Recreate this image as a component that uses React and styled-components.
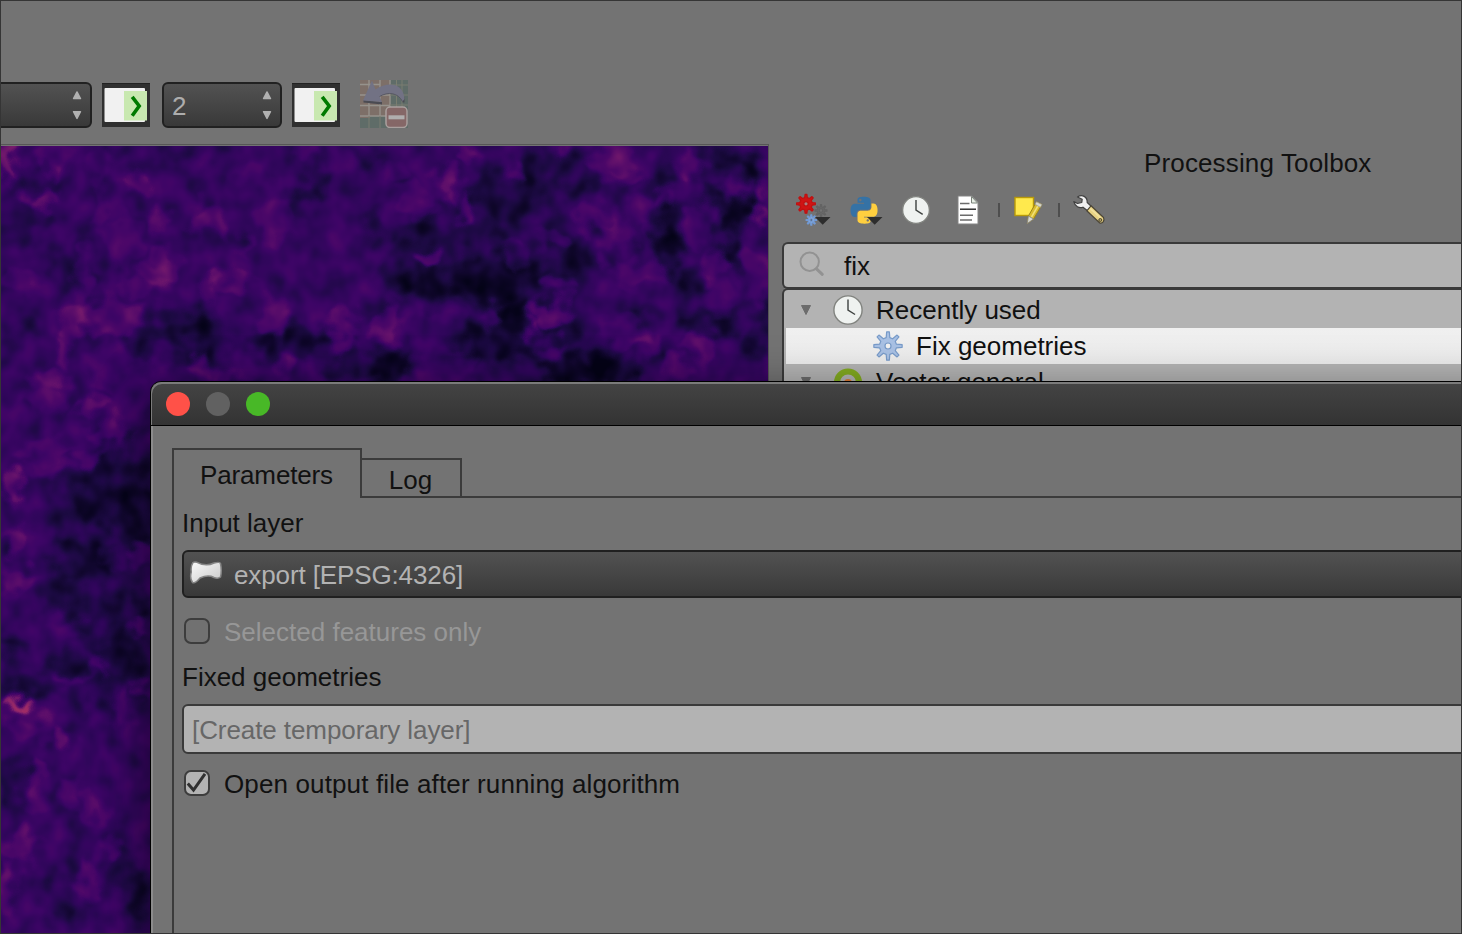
import React from 'react';
import styled, { createGlobalStyle } from 'styled-components';

const GlobalStyle = createGlobalStyle`
  body { margin: 0; overflow: hidden; background: #737373; }
  * { box-sizing: border-box; }
  svg { display: block; flex: none; }
`;

const Frame = styled.div`
  position: relative;
  display: flex;
  flex-direction: column;
  width: 1462px;
  height: 934px;
  overflow: hidden;
  border: 1px solid #353535;
  background: #737373;
  color: #111;
  font: 26px/36px "Liberation Sans", Arial, sans-serif;
  white-space: nowrap;
`;

const Toolbar = styled.div`
  display: flex;
  align-items: flex-start;
  flex: none;
  height: 143px;
  padding-top: 79px;
`;

const SpinBox = styled.div`
  display: flex;
  align-items: center;
  justify-content: space-between;
  flex: none;
  width: ${(p) => p.$width}px;
  height: 46px;
  margin: 2px 10px 0 ${(p) => p.$left}px;
  padding: 2px 7px 0 8px;
  border: 2px solid #212121;
  border-radius: 6px;
  background: linear-gradient(#525252, #393939);
  color: #adadad;
`;

const ZoomButton = styled.div`
  flex: none;
  width: 48px;
  height: 44px;
  margin-top: 3px;
  background: #303030;
`;

const UndoSlot = styled.div`
  margin-left: 20px;
`;

const Body = styled.div`
  display: flex;
  flex: 1;
  min-height: 0;
`;

const MapView = styled.div`
  flex: none;
  width: 768px;
  border-top: 1px solid #565656;
  border-right: 1px solid #565656;
  padding-top: 1px;
`;

const Panel = styled.div`
  display: flex;
  flex-direction: column;
  flex: 1;
  min-width: 0;
  padding-left: 13px;
`;

const PanelTitle = styled.div`
  height: 36px;
  margin-top: 1px;
  padding-left: 362px;
  letter-spacing: ${(p) => p.$spacing}px;
`;

const PanelTools = styled.div`
  display: flex;
  height: 50px;
  padding: 11px 0 0 13px;
`;

const Separator = styled.div`
  flex: none;
  width: 2px;
  height: 14px;
  margin: 11px ${(p) => p.$right}px 0 ${(p) => p.$left}px;
  background: #4e4e4e;
`;

const SearchBox = styled.div`
  display: flex;
  align-items: center;
  flex: none;
  height: 47px;
  margin-top: 11px;
  padding: 1px 0 0 14px;
  border: 2px solid #3a3a3a;
  border-right: 0;
  border-radius: 6px 0 0 6px;
  background: #b3b3b3;
`;

const Tree = styled.div`
  flex: 1;
  margin-top: -1px;
  padding: 2px 0 0 2px;
  border: 2px solid #3a3a3a;
  border-right: 0;
  border-radius: 6px 0 0 0;
  background: #b3b3b3;
`;

const TreeRow = styled.div`
  display: flex;
  align-items: center;
  height: 36px;
  background: ${(p) => (p.$selected ? 'linear-gradient(#f0f0f0, #ececec)' : 'transparent')};
`;

const Dialog = styled.div`
  position: absolute;
  left: 149px;
  top: 380px;
  width: 1500px;
  height: 700px;
  border: 1px solid #000;
  border-radius: 11px 0 0 0;
  background: #737373;
  box-shadow: 0 14px 50px rgba(0, 0, 0, 0.5);
  overflow: hidden;
`;

const TitleBar = styled.div`
  display: flex;
  align-items: center;
  gap: 16px;
  height: 44px;
  padding-left: 15px;
  border-bottom: 1px solid #000;
  border-radius: 10px 0 0 0;
  background: linear-gradient(#444, #333);
  box-shadow: inset 1px 2px 0 #7b7b7b;
`;

const Light = styled.span`
  width: 24px;
  height: 24px;
  border-radius: 50%;
  background: ${(p) => p.$color};
`;

const DialogBody = styled.div`
  height: 656px;
  padding: 22px 0 0 21px;
  box-shadow: inset 2px 0 0 #8c8c8c;
`;

const Tabs = styled.div`
  display: flex;
  align-items: flex-end;
`;

const Tab = styled.div`
  flex: none;
  width: ${(p) => (p.$active ? 190 : 100)}px;
  height: ${(p) => (p.$active ? 50 : 40)}px;
  padding-top: ${(p) => (p.$active ? 7 : 2)}px;
  padding-right: 1px;
  border: solid #3b3b3b;
  border-width: ${(p) => (p.$active ? '2px 2px 0 2px' : '2px 2px 2px 0')};
  text-align: center;
  letter-spacing: ${(p) => p.$spacing || 0}px;
`;

const TabLine = styled.div`
  flex: 1;
  height: 2px;
  background: #3b3b3b;
`;

const Pane = styled.div`
  height: 600px;
  padding: 7px 0 0 8px;
  border-left: 2px solid #3b3b3b;
`;

const Label = styled.div`
  height: 36px;
`;

const ComboBox = styled.div`
  display: flex;
  align-items: center;
  height: 48px;
  margin-top: 9px;
  padding: 2px 0 0 5px;
  border: 2px solid #202020;
  border-radius: 6px;
  background: linear-gradient(#525252, #393939);
  color: #b3b3b3;
  letter-spacing: ${(p) => p.$spacing}px;
`;

const LineEdit = styled.div`
  height: 50px;
  margin-top: 9px;
  padding: 6px 0 0 8px;
  border: 2px solid #3a3a3a;
  border-radius: 6px;
  background: #b3b3b3;
  color: #676767;
  letter-spacing: ${(p) => p.$spacing}px;
`;

const CheckRow = styled.div`
  display: flex;
  align-items: center;
  height: 26px;
  margin: ${(p) => p.$margin};
  padding-left: 2px;
  color: ${(p) => (p.$disabled ? '#979797' : '#111')};
  letter-spacing: ${(p) => p.$spacing || 0}px;
`;

const CheckBox = styled.span`
  width: 26px;
  height: 26px;
  margin-right: 14px;
  border: 2px solid #3d3d3d;
  border-radius: 7px;
  background: ${(p) => (p.$checked ? '#b3b3b3' : '#717171')};
`;

const CheckText = styled.span`
  padding-top: 2px;
`;

// [x, y, rx, ry, strength]: positive patches are warm, negative ones are dark.
const PATCHES = [
  [8, 158, 9, 26, .8], [55, 156, 18, 15, .35], [25, 198, 5, 9, .6], [45, 201, 12, 8, .75], [57, 173, 6, 7, .5],
  [135, 184, 13, 7, .55], [100, 165, 11, 18, .25], [100, 205, 6, 25, .3], [158, 222, 9, 12, .5], [208, 218, 17, 17, .5],
  [125, 240, 18, 24, .25], [160, 270, 17, 17, .5], [230, 281, 25, 8, .5], [210, 290, 7, 11, .5], [145, 287, 24, 10, .35],
  [112, 317, 28, 14, .5], [72, 322, 12, 16, .6], [62, 350, 9, 14, .55], [246, 243, 5, 8, .4], [275, 220, 20, 20, .3],
  [275, 315, 14, 15, .4], [345, 325, 15, 15, .55], [345, 347, 8, 9, .5], [387, 325, 12, 18, .55], [305, 150, 10, 8, .3],
  [202, 367, 8, 8, .5], [285, 367, 8, 8, .45], [225, 375, 14, 7, .5], [115, 365, 30, 14, .2], [50, 378, 14, 8, .5],
  [250, 180, 18, 10, .2], [83, 285, 6, 40, .3], [20, 280, 16, 6, .3],
  [468, 150, 15, 8, .5], [448, 172, 9, 12, .55], [453, 195, 5, 11, .6], [467, 210, 7, 13, .65], [412, 198, 12, 14, .35],
  [425, 212, 12, 8, .3], [398, 172, 8, 8, .3], [513, 172, 8, 10, .5], [565, 150, 5, 8, .5], [612, 160, 22, 18, .4],
  [630, 177, 14, 7, .5], [595, 218, 18, 14, .4], [618, 232, 18, 14, .35], [640, 210, 10, 18, .3], [690, 165, 8, 16, .45],
  [665, 200, 12, 6, .45], [700, 225, 12, 22, .35], [762, 192, 6, 9, .6], [758, 217, 5, 9, .8], [740, 188, 12, 4, .4],
  [428, 257, 12, 9, .65], [515, 255, 12, 15, .35], [555, 240, 16, 7, .35], [553, 285, 16, 8, .35], [640, 275, 24, 12, .4],
  [602, 258, 8, 6, .4], [713, 262, 8, 15, .4], [545, 317, 12, 11, .7], [563, 312, 7, 13, .65], [530, 328, 6, 7, .7],
  [492, 315, 10, 10, .4], [440, 330, 28, 22, .15], [443, 365, 36, 18, .25], [550, 350, 14, 9, .3], [622, 330, 22, 16, .3],
  [647, 340, 14, 8, .4], [755, 278, 14, 26, .3], [700, 345, 12, 12, .45], [678, 370, 12, 10, .5], [720, 300, 12, 20, .2],
  [15, 488, 9, 16, .85], [92, 405, 13, 8, .6], [98, 385, 10, 5, .4], [45, 400, 25, 12, .35], [45, 450, 30, 8, .35],
  [110, 432, 18, 11, .5], [88, 458, 10, 6, .5], [50, 466, 25, 6, .35], [15, 540, 14, 12, .5], [18, 582, 16, 11, .45],
  [18, 705, 13, 6, 1.2], [65, 738, 10, 9, .75], [30, 730, 22, 12, .4], [143, 555, 11, 10, .45], [110, 560, 12, 6, .25],
  [142, 625, 8, 10, .55], [95, 665, 7, 9, .5], [70, 682, 18, 4, .4], [142, 685, 7, 5, .6], [125, 708, 12, 16, .35],
  [35, 770, 9, 10, .45], [70, 790, 10, 14, .4], [35, 795, 7, 16, .35], [20, 845, 18, 12, .5], [90, 810, 15, 10, .4],
  [110, 845, 12, 7, .35], [85, 880, 7, 16, .4], [95, 896, 6, 7, .5], [8, 885, 9, 24, .5], [68, 628, 16, 8, .25],
  [310, 190, 16, 11, -.6], [325, 165, 8, 6, -.4], [375, 230, 8, 20, -.5], [365, 158, 11, 11, -.5], [180, 325, 30, 15, -.5],
  [205, 335, 26, 17, -.45], [305, 342, 22, 16, -.55], [264, 347, 15, 16, -.5], [65, 270, 15, 18, -.35], [95, 280, 8, 15, -.4],
  [81, 235, 8, 16, -.4], [33, 170, 7, 11, -.4], [20, 225, 28, 16, -.3], [180, 357, 38, 8, -.4], [370, 367, 50, 14, -.55],
  [392, 275, 10, 25, -.4], [125, 155, 22, 9, -.3], [200, 152, 30, 8, -.3], [20, 335, 14, 12, -.25], [138, 340, 24, 9, -.35],
  [505, 195, 34, 32, -.4], [545, 165, 24, 18, -.4], [582, 175, 14, 20, -.4], [668, 248, 13, 24, -.8], [673, 215, 12, 16, -.55],
  [715, 193, 15, 9, -.7], [752, 167, 13, 10, -.65], [722, 160, 14, 14, -.5], [738, 215, 14, 16, -.8], [732, 250, 8, 15, -.75],
  [495, 275, 42, 24, -.6], [430, 283, 32, 14, -.6], [510, 302, 36, 16, -.45], [490, 345, 40, 18, -.6], [515, 325, 14, 16, -.5],
  [590, 372, 48, 17, -.8], [430, 235, 25, 12, -.45], [395, 367, 20, 12, -.4], [634, 232, 5, 16, -.5], [570, 250, 15, 14, -.4],
  [702, 322, 24, 10, -.5], [725, 325, 14, 12, -.5], [762, 312, 8, 16, -.6], [695, 280, 14, 14, -.45], [667, 180, 12, 10, -.4],
  [640, 317, 24, 6, -.4], [757, 350, 10, 14, -.5], [668, 348, 9, 9, -.4], [560, 273, 22, 8, -.5], [560, 335, 22, 8, -.5],
  [500, 260, 100, 75, -.24], [520, 350, 110, 40, -.2], [700, 200, 60, 60, -.12], [110, 520, 60, 70, -.25], [120, 650, 50, 60, -.22],
  [115, 490, 42, 34, -.45], [135, 520, 25, 30, -.5], [90, 562, 34, 20, -.4], [60, 593, 20, 19, -.35], [65, 665, 16, 14, -.5],
  [30, 687, 24, 12, -.5], [10, 643, 15, 10, -.5], [122, 658, 22, 28, -.45], [93, 605, 24, 18, -.4], [98, 700, 12, 18, -.35],
  [143, 600, 10, 12, -.5], [12, 780, 14, 20, -.4], [120, 872, 20, 20, -.35], [60, 895, 14, 26, -.3], [140, 895, 12, 32, -.4],
  [60, 545, 18, 7, -.3], [140, 440, 14, 18, -.3], [8, 555, 10, 5, -.4],
];

// Dark patches go first so that the warm ones stay visible above them.
const ORDERED_PATCHES = [...PATCHES].sort((a, b) => Math.sign(a[4]) - Math.sign(b[4]));

function MapRaster() {
  return (
    <svg width="767" height="787" viewBox="1 146 767 787">
      <defs>
        <filter id="soft" x="-60%" y="-60%" width="220%" height="220%" colorInterpolationFilters="sRGB">
          <feGaussianBlur stdDeviation="3" />
        </filter>
        <filter id="shade" x="-80%" y="-80%" width="260%" height="260%" colorInterpolationFilters="sRGB">
          <feGaussianBlur stdDeviation="6" />
        </filter>
        <filter id="ramp" filterUnits="userSpaceOnUse" x="1" y="146" width="767" height="788" colorInterpolationFilters="sRGB">
          <feTurbulence type="fractalNoise" baseFrequency="0.05" numOctaves="2" seed="21" result="warp" />
          <feDisplacementMap in="SourceGraphic" in2="warp" scale="34" xChannelSelector="R" yChannelSelector="G" result="warped" />
          <feTurbulence type="fractalNoise" baseFrequency="0.046 0.04" numOctaves="2" seed="8" />
          <feColorMatrix values="1 0 0 0 0  1 0 0 0 0  1 0 0 0 0  0 0 0 0 1" result="noise" />
          <feComposite in="warped" in2="noise" operator="arithmetic" k1="0" k2="1" k3="0.5" k4="-0.25" />
          <feColorMatrix values="1 0 0 0 0  0 1 0 0 0  0 0 1 0 0  0 0 0 0 1" />
          <feComponentTransfer>
            <feFuncR type="table" tableValues=".016 .055 .11 .18 .24 .3 .39 .5 .62" />
            <feFuncG type="table" tableValues=".012 .024 .04 .026 .02 .03 .07 .125 .17" />
            <feFuncB type="table" tableValues=".09 .16 .26 .35 .4 .41 .42 .42 .4" />
          </feComponentTransfer>
        </filter>
      </defs>
      <g filter="url(#ramp)">
        <rect x="-40" y="100" width="860" height="880" fill="#6c6c6c" />
        {ORDERED_PATCHES.map(([x, y, rx, ry, s]) => (
          <ellipse key={`${x}-${y}`} cx={x} cy={y} rx={rx + 1} ry={ry + 1} fill={s > 0 ? '#fff' : '#000'}
            opacity={s > 0 ? s * 0.72 : -s * 0.9} filter={s > 0 ? 'url(#soft)' : 'url(#shade)'} />
        ))}
      </g>
    </svg>
  );
}

function gearPath(cx, cy, outer, inner, teeth) {
  const step = (Math.PI * 2) / teeth;
  const at = (r, a) => `${(cx + r * Math.sin(a)).toFixed(2)} ${(cy - r * Math.cos(a)).toFixed(2)}`;
  const points = [];
  for (let i = 0; i < teeth; i += 1) {
    const a = i * step;
    points.push(at(inner, a - step * 0.27), at(outer, a - step * 0.12), at(outer, a + step * 0.12), at(inner, a + step * 0.27));
  }
  return `M${points.join('L')}Z`;
}

function Gear({ cx, cy, outer, inner, hole, fill, stroke, holeFill, teeth = 8 }) {
  return (
    <g stroke={stroke} strokeWidth="1.2" strokeLinejoin="round">
      <path d={gearPath(cx, cy, outer, inner, teeth)} fill={fill} />
      <circle cx={cx} cy={cy} r={hole} fill={holeFill} />
    </g>
  );
}

function SpinArrows() {
  return (
    <svg width="12" height="30" viewBox="0 0 12 30" fill="#b0b0b0" stroke="#b0b0b0" strokeWidth="1.4" strokeLinejoin="round">
      <path d="M6 .9 9.5 7.6H2.5Z" />
      <path d="M2.5 20.6H9.5L6 27.4Z" />
    </svg>
  );
}

function GoIcon() {
  return (
    <svg width="48" height="44" viewBox="0 0 48 44">
      <path d="M0 .5H48" stroke="#222" />
      <rect x="2.5" y="5" width="40.5" height="34" rx="1" fill="#f1f1f1" />
      <rect x="22" y="8" width="23" height="29.5" fill="#c8e8b0" />
      <path d="M30.2 13.8 37.2 23 30.2 32.8" fill="none" stroke="#007a00" strokeWidth="3.6" />
    </svg>
  );
}

function MosaicUndoIcon() {
  return (
    <svg width="48" height="48" viewBox="0 0 48 48">
      <rect width="48" height="48" fill="#7d6f68" />
      <path d="M30 0H48V48H0V38H10V36H30Z" fill="#5f6c68" />
      <path d="M9 0V36M20 0V36M0 4.5H20M0 15H30M0 25.5H30M0 36H30M30 0V36" stroke="#96928c" strokeWidth="1.4" />
      <path d="M9 36V48M20 36V48M36.5 0V28M42 0V28M30 5H48M30 15H48M30 25H48" stroke="#7a7d70" strokeWidth="1" />
      <path d="M3.5 20V22.5L22 24.5V22ZM42.5 20V22.5H44.5V17Z" fill="#4b4b52" />
      <path d="M12 .5 3 20.5 22 22 19.5 16.5C28 11.5 38 12.5 42.5 21.5L44.5 19C43.5 3 28 1 15.5 9.5Z" fill="#727284" />
      <path d="M19.5 16.5C28 11.5 38 12.5 42.5 21.5" fill="none" stroke="#585864" strokeWidth="1" />
      <rect x="26" y="27" width="21" height="20.5" rx="4" fill="#856767" stroke="#aaa09e" strokeWidth="1.5" />
      <rect x="28.5" y="35.3" width="16" height="4" fill="#b0aeae" />
    </svg>
  );
}

function ClockFace({ cx, cy, r }) {
  return (
    <g>
      <circle cx={cx} cy={cy} r={r} fill="#eff2f0" stroke="#81837f" strokeWidth="1.4" />
      <path d={`M${cx} ${cy - r * 0.75}V${cy}L${cx + r * 0.5} ${cy + r * 0.32}`} fill="none" stroke="#3e4240" strokeWidth="1.4" />
    </g>
  );
}

const PYTHON = 'M14.25.18l.9.2.73.26.59.3.45.32.34.34.25.34.16.33.1.3.04.26.02.2-.01.13V8.5l-.05.63-.13.55-.21.46-.26.38-.3.31-.33.25-.35.19-.35.14-.33.1-.3.07-.26.04-.21.02H8.77l-.69.05-.59.14-.5.22-.41.27-.33.32-.27.35-.2.36-.15.37-.1.35-.07.32-.04.27-.02.21v3.06H3.17l-.21-.03-.28-.07-.32-.12-.35-.18-.36-.26-.36-.36-.35-.46-.32-.59-.28-.73-.21-.88-.14-1.05-.05-1.23.06-1.22.16-1.04.24-.87.32-.71.36-.57.4-.44.42-.33.42-.24.4-.16.36-.1.32-.05.24-.01h.16l.06.01h8.16v-.83H6.18l-.01-2.75-.02-.37.05-.34.11-.31.17-.28.25-.26.31-.23.38-.2.44-.18.51-.15.58-.12.64-.1.71-.06.77-.04.84-.02 1.27.05zm-6.3 1.98l-.23.33-.08.41.08.41.23.34.33.22.41.09.41-.09.33-.22.23-.34.08-.41-.08-.41-.23-.33-.33-.22-.41-.09-.41.09z';

function ModelsIcon() {
  return (
    <svg width="55" height="36" viewBox="0 0 55 36">
      <Gear cx={11} cy={11.8} outer={9.4} inner={6.3} hole={2.2} fill="#cf1414" stroke="#c01010" holeFill="#a98080" />
      <Gear cx={26} cy={18.5} outer={6} inner={3.6} hole={1.8} fill="#6b6b6b" stroke="#636363" holeFill="#737373" />
      <Gear cx={16.3} cy={28} outer={5.2} inner={3} hole={1.5} fill="#8fb0de" stroke="#7199d3" holeFill="#5d6f8a" />
      <path d="M20 25H35.5L27.7 32.8Z" fill="#2d2d2d" />
    </svg>
  );
}

function PythonIcon() {
  return (
    <svg width="50" height="36" viewBox="0 0 50 36">
      <g transform="translate(.6 4.8) scale(1.12)">
        <path d={PYTHON} fill="#3572a5" />
        <path d={PYTHON} fill="#ffcf3f" transform="rotate(180 12 12)" />
      </g>
      <path d="M17 25H32.5L24.7 32.8Z" fill="#2d2d2d" />
    </svg>
  );
}

function HistoryIcon() {
  return (
    <svg width="55" height="36" viewBox="0 0 55 36"><ClockFace cx={16} cy={18} r={13.4} /></svg>
  );
}

function ResultsIcon() {
  return (
    <svg width="43" height="36" viewBox="0 0 43 36">
      <path d="M3 4H17L23 10.5V32H3Z" fill="#fff" stroke="#858585" />
      <path d="M16.5 4.5 22.5 11H16.5Z" fill="#e8efe6" stroke="#7a837a" />
      <path d="M5 11.5H14.5M5 23.3H18M5 28H17" stroke="#6c6c6c" strokeWidth="1.4" />
      <path d="M5 17.2H21" stroke="#222" strokeWidth="1.4" />
    </svg>
  );
}

function NoteIcon() {
  return (
    <svg width="44" height="36" viewBox="0 0 44 36">
      <rect x="3" y="5.5" width="18.5" height="18" fill="#ffe94d" stroke="#b99a08" strokeWidth="1.4" />
      <path d="M24.5 9.8 30 12.6 21.5 27 15.3 31.5 16.4 24Z" fill="#d9bc2f" stroke="#9d8517" strokeWidth="1" />
      <path d="M26.5 13 19.5 25" stroke="#f2e077" strokeWidth="1.5" />
      <path d="M24.5 9.8 30 12.6 28.4 15.3 23 12.3Z" fill="#d8d8c8" stroke="#999" strokeWidth=".7" />
      <path d="M16.4 24 21.5 27 15.3 31.5Z" fill="#d8d8d0" stroke="#848484" strokeWidth=".8" />
    </svg>
  );
}

function WrenchIcon() {
  return (
    <svg width="40" height="36" viewBox="0 0 40 36" strokeLinejoin="round">
      <path d="M5.5 5C10 2 15.5 4.5 15.2 10.5L19.5 14.5 15.5 18.8 11 15.2C7 16.8 3 14.5 1.8 9.5L5.5 11.5 9.8 10.5 10.2 7.2Z" fill="#efefef" stroke="#414141" strokeWidth="1.2" />
      <path d="M19 13.8 31.5 25.5C32.8 28.5 31 31.5 27.8 31L14.8 18.8Z" fill="#e9d384" stroke="#4c4636" strokeWidth="1.2" />
      <path d="M18.3 16.5 28.5 25.8" stroke="#f3e3a0" strokeWidth="1.6" />
      <circle cx="28.3" cy="28" r="1.5" fill="#b7a35c" stroke="#4c4636" />
    </svg>
  );
}

function SearchIcon() {
  return (
    <svg width="46" height="36" viewBox="0 0 46 36" fill="none" stroke="#929292" strokeLinecap="round">
      <circle cx="11.7" cy="13.8" r="9.2" strokeWidth="2" />
      <path d="M18.5 20.8 24.3 26.3" strokeWidth="3" />
    </svg>
  );
}

function Disclosure() {
  return (
    <svg width="44" height="36" viewBox="0 0 44 36"><path d="M15.5 13.5H24.5L20 22.5Z" fill="#6c6c6c" stroke="#6c6c6c" strokeLinejoin="round" /></svg>
  );
}

function RecentIcon() {
  return (
    <svg width="46" height="36" viewBox="0 0 46 36"><ClockFace cx={18} cy={18} r={14.1} /></svg>
  );
}

function AlgorithmIcon() {
  return (
    <svg width="130" height="36" viewBox="0 0 130 36">
      <Gear cx={102} cy={18} outer={14.2} inner={8.6} hole={3} fill="#a9c1e4" stroke="#789bc9" holeFill="#f2f2f2" />
    </svg>
  );
}

function QgisIcon() {
  return (
    <svg width="46" height="36" viewBox="0 0 46 36">
      <circle cx="18" cy="18.5" r="11" fill="none" stroke="#82aa20" strokeWidth="6" />
      <circle cx="18" cy="19" r="4" fill="#dc7b35" />
    </svg>
  );
}

function PolygonIcon() {
  return (
    <svg width="45" height="30" viewBox="0 0 45 30">
      <defs>
        <linearGradient id="polygon" x1="0" y1="0" x2="1" y2="1">
          <stop offset="0" stopColor="#fafafa" /><stop offset="1" stopColor="#c9c9c9" />
        </linearGradient>
      </defs>
      <path d="M4 2.5Q5.5 1.5 8 2.3Q17 7 25 3Q31 1.5 31.5 3.5Q33 11 31.5 17Q29 19 25 17.5Q19 14.5 11 18Q6 24 3.5 22.5Q.5 18 2.3 12Q1.5 6 4 2.5Z"
        fill="url(#polygon)" stroke="#858585" strokeWidth="1.5" />
    </svg>
  );
}

function CheckMark() {
  return (
    <svg width="22" height="22" viewBox="0 0 22 22"><path d="M1.8 11.5 7.5 18 19 1.8" fill="none" stroke="#303030" strokeWidth="3" /></svg>
  );
}

export default function App() {
  return (
    <Frame>
      <GlobalStyle />
      <Toolbar>
        <SpinBox $width={111} $left={-20}><span /><SpinArrows /></SpinBox>
        <ZoomButton><GoIcon /></ZoomButton>
        <SpinBox $width={120} $left={12}><span>2</span><SpinArrows /></SpinBox>
        <ZoomButton><GoIcon /></ZoomButton>
        <UndoSlot><MosaicUndoIcon /></UndoSlot>
      </Toolbar>
      <Body>
        <MapView><MapRaster /></MapView>
        <Panel>
          <PanelTitle $spacing={0.14}>Processing Toolbox</PanelTitle>
          <PanelTools>
            <ModelsIcon />
            <PythonIcon />
            <HistoryIcon />
            <ResultsIcon />
            <Separator $left={0} $right={12} />
            <NoteIcon />
            <Separator $left={2} $right={12} />
            <WrenchIcon />
          </PanelTools>
          <SearchBox><SearchIcon />fix</SearchBox>
          <Tree>
            <TreeRow><Disclosure /><RecentIcon />Recently used</TreeRow>
            <TreeRow $selected><AlgorithmIcon />Fix geometries</TreeRow>
            <TreeRow><Disclosure /><QgisIcon />Vector general</TreeRow>
          </Tree>
        </Panel>
      </Body>
      <Dialog>
        <TitleBar>
          <Light $color="#ff5148" />
          <Light $color="#616161" />
          <Light $color="#48b827" />
        </TitleBar>
        <DialogBody>
          <Tabs>
            <Tab $active $spacing={-0.15}>Parameters</Tab>
            <Tab>Log</Tab>
            <TabLine />
          </Tabs>
          <Pane>
            <Label>Input layer</Label>
            <ComboBox $spacing={-0.12}><PolygonIcon />export [EPSG:4326]</ComboBox>
            <CheckRow $margin="20px 0 15px" $disabled>
              <CheckBox />
              <CheckText>Selected features only</CheckText>
            </CheckRow>
            <Label>Fixed geometries</Label>
            <LineEdit $spacing={-0.08}>[Create temporary layer]</LineEdit>
            <CheckRow $margin="16px 0 0" $spacing={0.13}>
              <CheckBox $checked><CheckMark /></CheckBox>
              <CheckText>Open output file after running algorithm</CheckText>
            </CheckRow>
          </Pane>
        </DialogBody>
      </Dialog>
    </Frame>
  );
}
